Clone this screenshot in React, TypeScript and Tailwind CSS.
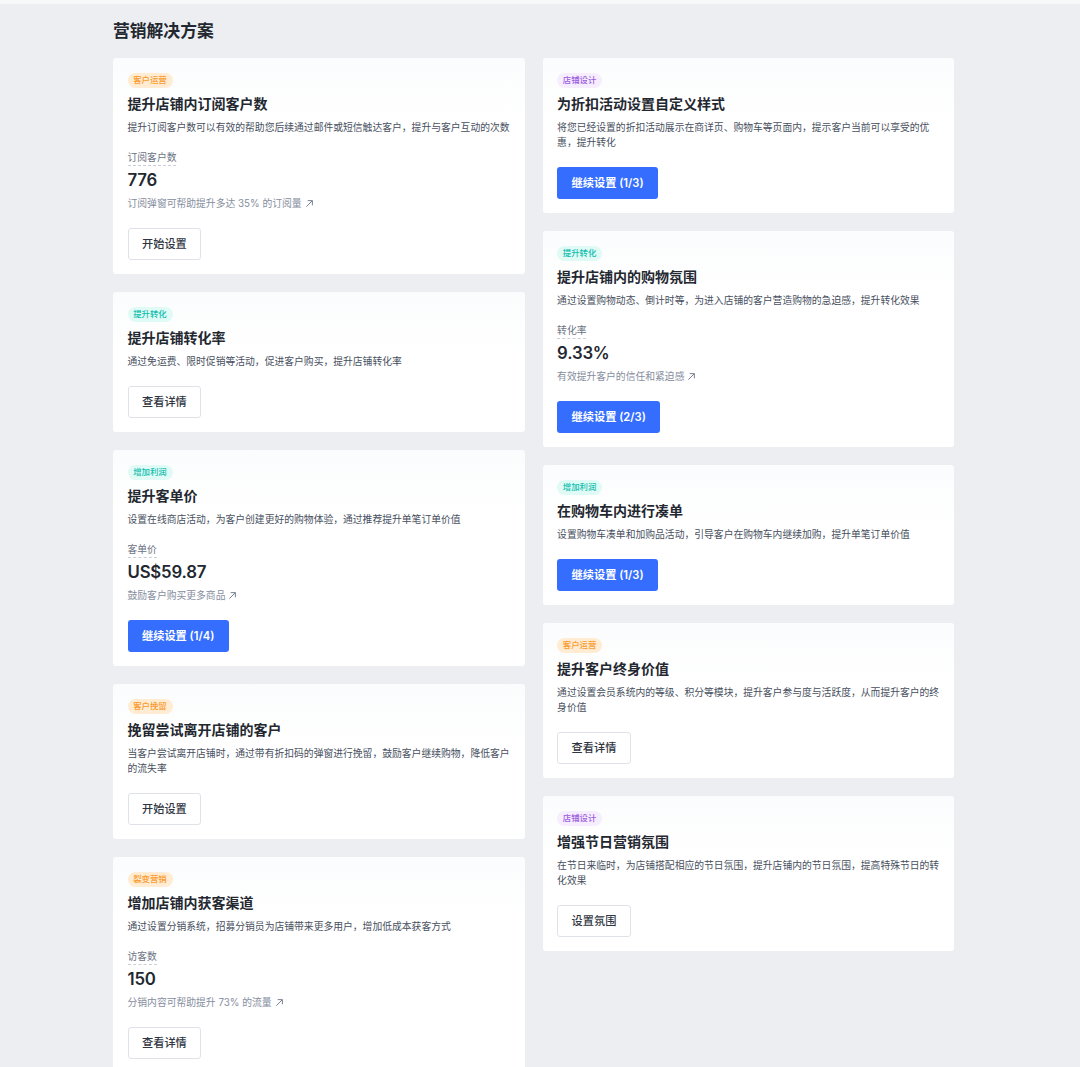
type Tone = "orange" | "purple" | "teal";

type Plan = {
  tag: string;
  tone: Tone;
  title: string;
  desc: string;
  metric?: { label: string; value: string; hint: string };
  action: string;
  primary?: boolean;
};

const toneClass: Record<Tone, string> = {
  orange: "bg-[#ffecd2] text-[#fa9a2d]",
  purple: "bg-[#f6eefe] text-[#9c5ce0]",
  teal: "bg-[#e0fbf6] text-[#12bdae]",
};

const leftPlans: Plan[] = [
  {
    tag: "客户运营",
    tone: "orange",
    title: "提升店铺内订阅客户数",
    desc: "提升订阅客户数可以有效的帮助您后续通过邮件或短信触达客户，提升与客户互动的次数",
    metric: { label: "订阅客户数", value: "776", hint: "订阅弹窗可帮助提升多达 35% 的订阅量" },
    action: "开始设置",
  },
  {
    tag: "提升转化",
    tone: "teal",
    title: "提升店铺转化率",
    desc: "通过免运费、限时促销等活动，促进客户购买，提升店铺转化率",
    action: "查看详情",
  },
  {
    tag: "增加利润",
    tone: "teal",
    title: "提升客单价",
    desc: "设置在线商店活动，为客户创建更好的购物体验，通过推荐提升单笔订单价值",
    metric: { label: "客单价", value: "US$59.87", hint: "鼓励客户购买更多商品" },
    action: "继续设置 (1/4)",
    primary: true,
  },
  {
    tag: "客户挽留",
    tone: "orange",
    title: "挽留尝试离开店铺的客户",
    desc: "当客户尝试离开店铺时，通过带有折扣码的弹窗进行挽留，鼓励客户继续购物，降低客户的流失率",
    action: "开始设置",
  },
  {
    tag: "裂变营销",
    tone: "orange",
    title: "增加店铺内获客渠道",
    desc: "通过设置分销系统，招募分销员为店铺带来更多用户，增加低成本获客方式",
    metric: { label: "访客数", value: "150", hint: "分销内容可帮助提升 73% 的流量" },
    action: "查看详情",
  },
];

const rightPlans: Plan[] = [
  {
    tag: "店铺设计",
    tone: "purple",
    title: "为折扣活动设置自定义样式",
    desc: "将您已经设置的折扣活动展示在商详页、购物车等页面内，提示客户当前可以享受的优惠，提升转化",
    action: "继续设置 (1/3)",
    primary: true,
  },
  {
    tag: "提升转化",
    tone: "teal",
    title: "提升店铺内的购物氛围",
    desc: "通过设置购物动态、倒计时等，为进入店铺的客户营造购物的急迫感，提升转化效果",
    metric: { label: "转化率", value: "9.33%", hint: "有效提升客户的信任和紧迫感" },
    action: "继续设置 (2/3)",
    primary: true,
  },
  {
    tag: "增加利润",
    tone: "teal",
    title: "在购物车内进行凑单",
    desc: "设置购物车凑单和加购品活动，引导客户在购物车内继续加购，提升单笔订单价值",
    action: "继续设置 (1/3)",
    primary: true,
  },
  {
    tag: "客户运营",
    tone: "orange",
    title: "提升客户终身价值",
    desc: "通过设置会员系统内的等级、积分等模块，提升客户参与度与活跃度，从而提升客户的终身价值",
    action: "查看详情",
  },
  {
    tag: "店铺设计",
    tone: "purple",
    title: "增强节日营销氛围",
    desc: "在节日来临时，为店铺搭配相应的节日氛围，提升店铺内的节日氛围，提高特殊节日的转化效果",
    action: "设置氛围",
  },
];

function PlanCard({ plan }: { plan: Plan }) {
  return (
    <div className="rounded-[3px] bg-gradient-to-b from-[#fbfcfd] to-white to-[60px] pt-[15px] pr-[13px] pb-[14px] pl-[14.5px]">
      <span
        className={`flex h-[15px] w-[45px] items-center justify-center rounded-full text-[8.4px] font-medium ${toneClass[plan.tone]}`}
      >
        {plan.tag}
      </span>
      <h3 className="mt-[6px] text-[14px] leading-[20px] font-semibold text-[#23272f]">{plan.title}</h3>
      <p className="mt-[6px] text-[9.8px] leading-[15px] text-[#474f5e]">{plan.desc}</p>

      {plan.metric && (
        <div className="mt-[15px]">
          <span className="block w-fit border-b border-dashed border-[#c9ced8] text-[9.8px] leading-[15px] text-[#6b7384]">
            {plan.metric.label}
          </span>
          <div className="mt-[2px] text-[16.8px] leading-[24px] font-semibold tracking-[-0.2px] text-[#23272f]">
            {plan.metric.value}
          </div>
          <div className="mt-[4px] flex items-center gap-[3px] text-[9.8px] leading-[15px] text-[#858d9e]">
            <span>{plan.metric.hint}</span>
            <svg width="9" height="9" viewBox="0 0 10 10" fill="none" stroke="#6b7384" strokeWidth="1">
              <path d="M1.5 8.5 L8 2 M3 1.8 H8.2 V7" />
            </svg>
          </div>
        </div>
      )}

      <button
        className={
          plan.primary
            ? "mt-[17px] block h-[32px] rounded-[3px] bg-[#356dff] px-[14.5px] text-[11.2px] font-semibold text-white"
            : "mt-[17px] block h-[32px] rounded-[3px] border border-[#dfe2e8] bg-white px-[13.5px] text-[11.2px] font-medium text-[#2f3541]"
        }
      >
        {plan.action}
      </button>
    </div>
  );
}

export default function App() {
  return (
    <div className="h-[1067px] overflow-hidden bg-[#eceef2] font-['Inter','Noto_Sans_CJK_SC',sans-serif]">
      <div className="h-[4px] bg-[#f7f8fa]" />
      <div className="ml-[113px] w-[841px]">
        <h1 className="mt-[17px] text-[16.8px] leading-[21px] font-semibold text-[#23272f]">营销解决方案</h1>
        <div className="mt-[16px] grid grid-cols-[412px_411.4px] items-start gap-x-[17.6px]">
          <div className="flex flex-col gap-[18px]">
            {leftPlans.map((p) => (
              <PlanCard key={p.title} plan={p} />
            ))}
          </div>
          <div className="flex flex-col gap-[18px]">
            {rightPlans.map((p) => (
              <PlanCard key={p.title} plan={p} />
            ))}
          </div>
        </div>
      </div>
    </div>
  );
}
